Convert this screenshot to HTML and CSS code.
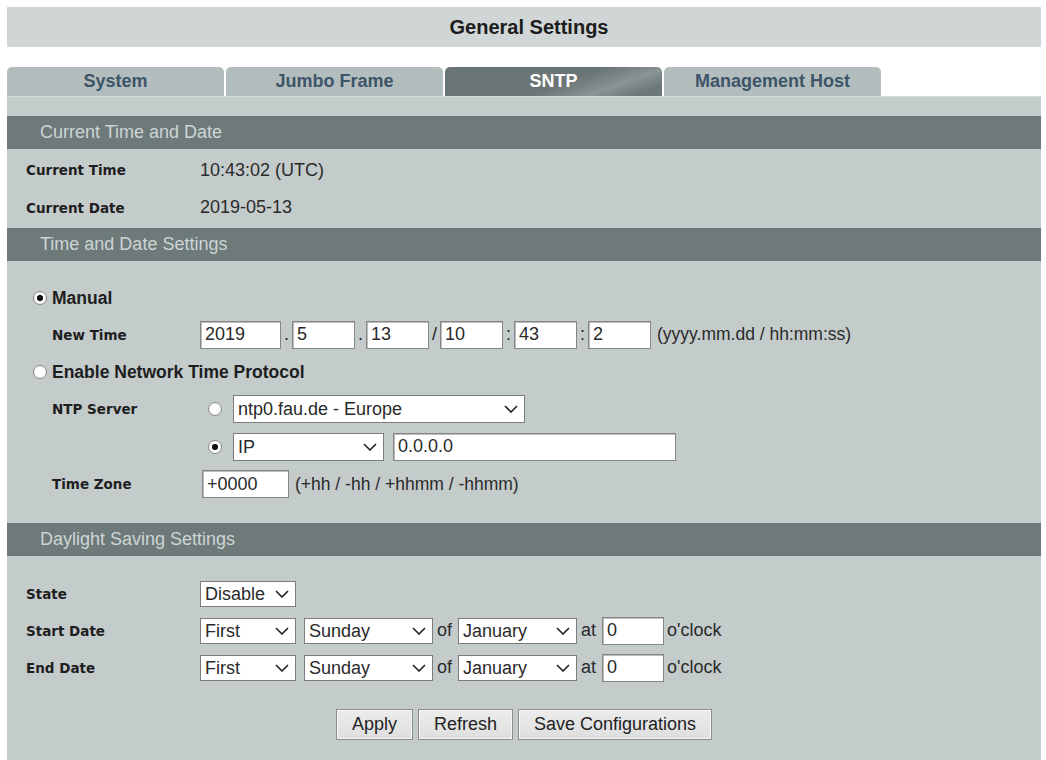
FILE: index.html
```html
<!DOCTYPE html>
<html lang="en">

<head>
    <meta charset="UTF-8">
    <title>General Settings</title>
    <link rel="stylesheet" href="styles.css">
</head>

<body>
    <div class="title-bar">General Settings</div>

    <nav class="tabs">
        <div class="tab">System</div>
        <div class="tab">Jumbo Frame</div>
        <div class="tab active">SNTP</div>
        <div class="tab">Management Host</div>
    </nav>

    <main class="panel">
        <!-- current time -->
        <div class="section-head">Current Time and Date</div>
        <section class="section current">
            <div class="row">
                <span class="label">Current Time</span>
                <span class="value">10:43:02 (UTC)</span>
            </div>
            <div class="row">
                <span class="label">Current Date</span>
                <span class="value">2019-05-13</span>
            </div>
        </section>

        <!-- time settings -->
        <div class="section-head">Time and Date Settings</div>
        <section class="section settings">
            <div class="row radio-row r36">
                <input type="radio" name="mode" checked>
                <span class="big-label">Manual</span>
            </div>
            <div class="row sub-row r37">
                <span class="label">New Time</span>
                <input type="text" class="box year" value="2019"><span class="sep">.</span>
                <input type="text" class="box" value="5"><span class="sep">.</span>
                <input type="text" class="box" value="13"><span class="sep">/</span>
                <input type="text" class="box" value="10"><span class="sep">:</span>
                <input type="text" class="box" value="43"><span class="sep">:</span>
                <input type="text" class="box" value="2">
                <span class="hint">(yyyy.mm.dd / hh:mm:ss)</span>
            </div>
            <div class="row radio-row r38">
                <input type="radio" name="mode">
                <span class="big-label">Enable Network Time Protocol</span>
            </div>
            <div class="row sub-row r36">
                <span class="label">NTP Server</span>
                <input type="radio" name="ntp" class="small-radio">
                <span class="select w-ntp">
                    <select><option>ntp0.fau.de - Europe</option></select>
                    <svg class="chev" width="14" height="8" viewBox="0 0 14 8"><path d="M1 1 L7 7 L13 1" fill="none" stroke="#222" stroke-width="1.6"/></svg>
                </span>
            </div>
            <div class="row sub-row r39">
                <span class="label"></span>
                <input type="radio" name="ntp" class="small-radio" checked>
                <span class="select w-ip">
                    <select><option>IP</option></select>
                    <svg class="chev" width="14" height="8" viewBox="0 0 14 8"><path d="M1 1 L7 7 L13 1" fill="none" stroke="#222" stroke-width="1.6"/></svg>
                </span>
                <input type="text" class="box ip" value="0.0.0.0">
            </div>
            <div class="row sub-row r36">
                <span class="label">Time Zone</span>
                <input type="text" class="box tz" value="+0000">
                <span class="hint">(+hh / -hh / +hhmm / -hhmm)</span>
            </div>
        </section>

        <!-- daylight saving -->
        <div class="section-head">Daylight Saving Settings</div>
        <section class="section daylight">
            <div class="row">
                <span class="label">State</span>
                <span class="select short w-state">
                    <select><option>Disable</option></select>
                    <svg class="chev" width="14" height="8" viewBox="0 0 14 8"><path d="M1 1 L7 7 L13 1" fill="none" stroke="#222" stroke-width="1.6"/></svg>
                </span>
            </div>
            <div class="row">
                <span class="label">Start Date</span>
                <span class="select short w-first">
                    <select><option>First</option></select>
                    <svg class="chev" width="14" height="8" viewBox="0 0 14 8"><path d="M1 1 L7 7 L13 1" fill="none" stroke="#222" stroke-width="1.6"/></svg>
                </span>
                <span class="select short w-day">
                    <select><option>Sunday</option></select>
                    <svg class="chev" width="14" height="8" viewBox="0 0 14 8"><path d="M1 1 L7 7 L13 1" fill="none" stroke="#222" stroke-width="1.6"/></svg>
                </span>
                <span class="word">of</span>
                <span class="select short w-month">
                    <select><option>January</option></select>
                    <svg class="chev" width="14" height="8" viewBox="0 0 14 8"><path d="M1 1 L7 7 L13 1" fill="none" stroke="#222" stroke-width="1.6"/></svg>
                </span>
                <span class="word">at</span>
                <input type="text" class="box hour" value="0">
                <span class="word clock">o'clock</span>
            </div>
            <div class="row">
                <span class="label">End Date</span>
                <span class="select short w-first">
                    <select><option>First</option></select>
                    <svg class="chev" width="14" height="8" viewBox="0 0 14 8"><path d="M1 1 L7 7 L13 1" fill="none" stroke="#222" stroke-width="1.6"/></svg>
                </span>
                <span class="select short w-day">
                    <select><option>Sunday</option></select>
                    <svg class="chev" width="14" height="8" viewBox="0 0 14 8"><path d="M1 1 L7 7 L13 1" fill="none" stroke="#222" stroke-width="1.6"/></svg>
                </span>
                <span class="word">of</span>
                <span class="select short w-month">
                    <select><option>January</option></select>
                    <svg class="chev" width="14" height="8" viewBox="0 0 14 8"><path d="M1 1 L7 7 L13 1" fill="none" stroke="#222" stroke-width="1.6"/></svg>
                </span>
                <span class="word">at</span>
                <input type="text" class="box hour" value="0">
                <span class="word clock">o'clock</span>
            </div>

            <div class="button-row">
                <button>Apply</button>
                <button>Refresh</button>
                <button>Save Configurations</button>
            </div>
        </section>
    </main>
</body>

</html>
```

FILE: styles.css
```css
:root {
    --panel: #c4cbcb;
    --head: #6e7979;
    --tab: #b4bdbd;
    --text: #222;
    --value-font: "Liberation Sans", Arial, sans-serif;
    --label-font: "DejaVu Sans", Verdana, sans-serif;
}

body {
    margin: 0;
    padding: 7px 5px 0 7px;
    background: #fff;
    font-family: var(--value-font);
    color: var(--text);
    width: 1034px;
}

.title-bar {
    height: 40px;
    background: #d0d6d6;
    display: flex;
    justify-content: center;
    align-items: center;
    font-weight: bold;
    font-size: 20px;
    color: #1c1c1c;
    padding-left: 10px;
}

.tabs {
    display: flex;
    gap: 2px;
    margin-top: 20px;
    height: 29px;
}

.tab {
    width: 217px;
    background: var(--tab);
    border-radius: 5px 5px 0 0;
    display: flex;
    justify-content: center;
    align-items: center;
    font-weight: bold;
    font-size: 18px;
    color: #3c5568;
}

.tab.active {
    background: linear-gradient(160deg, #6a7575 55%, #8a9494 75%, #6c7777 90%);
    color: #fff;
}

.panel {
    background: var(--panel);
    padding-top: 19px;
    min-height: 650px;
    border-top: 1px solid #d6dcdc;
}

.section-head {
    height: 33px;
    background: var(--head);
    color: #cdd5d5;
    font-size: 18px;
    display: flex;
    align-items: center;
    padding-left: 33px;
}

.section.current {
    padding: 2px 0 2px;
}

.section.settings {
    padding: 19px 0 21px;
}

.section.daylight {
    padding-top: 19px;
}

.row {
    display: flex;
    align-items: center;
    height: 37px;
    padding-left: 19px;
}

.section.current .row:first-child {
    height: 38px;
}

.r36 { height: 36px; }
.r37 { height: 37px; }
.r38 { height: 38px; }
.r39 { height: 39px; }

.label {
    width: 174px;
    flex-shrink: 0;
    font-family: var(--label-font);
    font-weight: bold;
    font-size: 13.5px;
    color: #1e1e1e;
}

.value {
    font-size: 18px;
    color: #2a2a2a;
}

.radio-row {
    padding-left: 26px;
}

.sub-row {
    padding-left: 45px;
}

.sub-row .label {
    width: 148px;
}

.big-label {
    font-weight: bold;
    font-size: 17.5px;
    color: #1e1e1e;
}

input[type=radio] {
    appearance: none;
    box-sizing: border-box;
    width: 14px;
    height: 14px;
    margin: 0 5px 0 0;
    border: 1px solid #8c8c8c;
    border-radius: 50%;
    background: radial-gradient(circle, #fff 40%, #e8e8e8 100%);
    flex-shrink: 0;
}

input[type=radio]:checked {
    background: radial-gradient(circle, #111 0 2.8px, #fff 3.4px, #ececec 100%);
}

.small-radio {
    margin: 0 11px 0 8px !important;
}

.box {
    box-sizing: border-box;
    width: 63px;
    height: 28px;
    border: 1px solid #868686;
    box-shadow: inset 1px 1px 0 #bdbdbd;
    background: #fff;
    font-family: var(--value-font);
    font-size: 18px;
    color: #2a2a2a;
    padding: 0 4px;
    margin: 0;
}

.box.year { width: 81px; }
.box.ip { width: 283px; margin-left: 9px; }
.box.tz { width: 87px; margin-left: 2px; }
.box.hour { width: 62px; }

.sep {
    width: 11px;
    text-align: center;
    font-size: 18px;
}

.hint {
    font-size: 17.5px;
    margin-left: 6px;
    color: #2a2a2a;
}

.select {
    position: relative;
    display: inline-flex;
    height: 28px;
}

.select select {
    appearance: none;
    box-sizing: border-box;
    width: 100%;
    height: 100%;
    border: 1px solid #7c7c7c;
    border-radius: 0;
    background: #fff;
    font-family: var(--value-font);
    font-size: 18px;
    color: #2a2a2a;
    padding: 0 4px;
    margin: 0;
}

.select .chev {
    position: absolute;
    right: 7px;
    top: 10px;
    pointer-events: none;
}

.select.short {
    height: 26px;
}

.select.short .chev {
    top: 9px;
}

.w-ntp { width: 292px; }
.w-ip { width: 151px; }
.w-state { width: 96px; }
.w-first { width: 96px; margin-right: 8px; }
.w-day { width: 129px; }
.w-month { width: 119px; }

.word {
    font-size: 18px;
    margin: 0 6px 0 4px;
    color: #2a2a2a;
}

.word.clock {
    margin-left: 3px;
}

.button-row {
    display: flex;
    justify-content: center;
    gap: 5px;
    margin-top: 23px;
    padding-bottom: 20px;
}

button {
    height: 31px;
    padding: 0 15px;
    background: linear-gradient(#ececec, #dedede);
    border: 1px solid #8d8d8d;
    box-shadow: inset 0 0 0 1px #f6f6f6;
    font-family: var(--value-font);
    font-size: 18px;
    color: #222;
}
```
